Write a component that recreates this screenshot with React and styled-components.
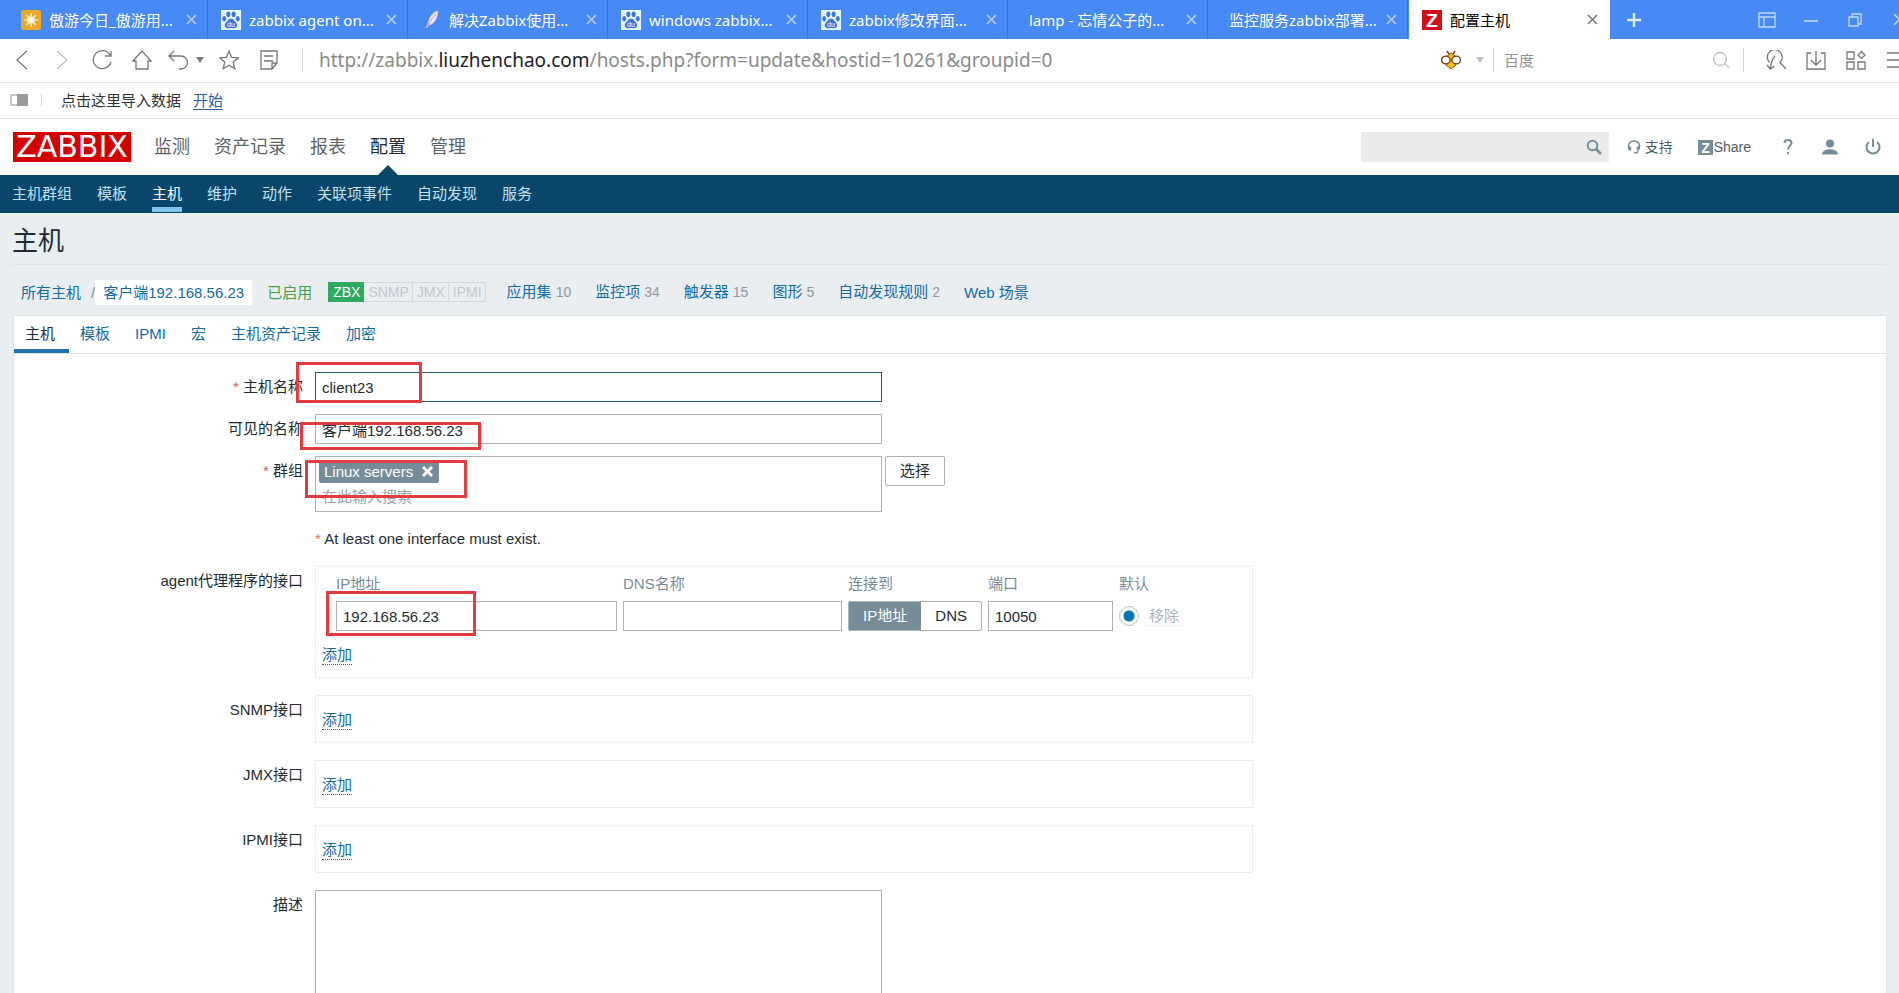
import React from "react";
import styled, { createGlobalStyle, css } from "styled-components";

const colors = {
  chrome: "#4789f5",
  link: "#146ba6",
  navy: "#0a466a",
  slate: "#768d99",
  text: "#1f2c33",
  pageBg: "#ebeef0",
  line: "#dfe4e7",
  inputLine: "#a9b4b4",
  mark: "#e43b40",
};

const uiFont = `"Noto Sans", "Noto Sans CJK SC", sans-serif`;
const pageFont = `"Liberation Sans", "Noto Sans CJK SC", sans-serif`;

const GlobalStyle = createGlobalStyle`
  * { box-sizing: border-box; }
  body {
    margin: 0;
    overflow: hidden;
    background: ${colors.pageBg};
    color: ${colors.text};
    font-family: ${pageFont};
    font-size: 15px;
    line-height: 20px;
  }
  button, input, textarea { font: inherit; color: inherit; }
  svg { display: block; flex: none; }
`;

/* Browser window */

const BrowserChrome = styled.div`
  font-family: ${uiFont};
  background: #fff;
`;

const PlainButton = styled.button`
  border: none;
  background: none;
  padding: 0;
  display: flex;
  align-items: center;
  justify-content: center;
  flex: none;
`;

const TabBar = styled.div`
  display: flex;
  height: 39px;
  padding-left: 8px;
  background: ${colors.chrome};
  color: #fff;
  overflow: hidden;
`;

const Tab = styled.div`
  display: flex;
  align-items: center;
  gap: 8px;
  flex: 0 0 200px;
  padding: 0 10px 0 13px;
  border-right: 1px solid #3a70cc;
  white-space: nowrap;
  ${(props) =>
    props.$active &&
    css`
      flex-basis: 201px;
      padding-right: 12px;
      margin-left: 1px;
      background: #fff;
      color: #000;
      border-right: none;
    `}
`;

const TabTitle = styled.span`
  flex: 1;
  min-width: 0;
`;

const TabClose = styled(PlainButton)`
  color: ${(props) => (props.$active ? "#777" : "#b5d0fb")};
`;

const NewTab = styled(PlainButton)`
  width: 48px;
  color: #dceaff;
`;

const WindowControls = styled.div`
  display: flex;
  margin: 0 -22px 0 auto;
  color: #c4dafc;
`;

const WindowButton = styled(PlainButton)`
  width: 44px;
`;

const Toolbar = styled.div`
  display: flex;
  align-items: center;
  height: 44px;
  padding: 0 0 2px 2px;
  border-bottom: 1px solid #e3e3e3;
  color: #777;
  overflow: hidden;
`;

const ToolButton = styled(PlainButton)`
  width: ${(props) => props.$width || 40}px;
  height: 40px;
  gap: ${(props) => props.$gap || 0}px;
  color: ${(props) => (props.$dim ? "#c0c0c0" : "inherit")};
`;

const Divider = styled.span`
  width: 1px;
  height: ${(props) => (props.$short ? 12 : 24)}px;
  background: #d4d4d4;
  margin: 0 ${(props) => props.$right || 0}px 0 ${(props) => props.$left || 0}px;
`;

const Address = styled.div`
  flex: 1;
  font-size: 19px;
  line-height: 24px;
  color: #8b8b8b;
  white-space: nowrap;

  b {
    font-weight: normal;
    color: #222;
  }
`;

const EngineInput = styled.input`
  width: 206px;
  border: none;
  outline: none;
  padding: 0;

  &::placeholder {
    color: #929292;
    opacity: 1;
  }
`;

const ToolbarEnd = styled.div`
  display: flex;
  margin: 0 -17px 0 12px;
`;

const BookmarkBar = styled.div`
  display: flex;
  align-items: center;
  height: 36px;
  padding: 0 0 2px 10px;
  border-bottom: 1px solid #e3e3e3;
  color: #333;

  a {
    color: #2f5fa8;
    margin-left: 12px;
    text-underline-offset: 3px;
  }
`;

/* Zabbix header */

const Header = styled.header`
  display: flex;
  align-items: center;
  height: 56px;
  padding: 0 13px;
  background: #fff;
`;

const Logo = styled.a`
  width: 118px;
  height: 30px;
  background: #d40000;
  color: #fff;
  font: 30px/29px "DejaVu Sans", sans-serif;
  text-align: center;
  text-decoration: none;
`;

const MainNav = styled.nav`
  display: flex;
  align-self: stretch;
  gap: 24px;
  margin-left: 23px;
  font-size: 18px;
`;

const MainLink = styled.a`
  display: flex;
  align-items: center;
  position: relative;
  color: ${(props) => (props.$active ? "#1f2c33" : "#5c6468")};
  text-decoration: none;
  ${(props) =>
    props.$active &&
    css`
      &::after {
        content: "";
        position: absolute;
        left: calc(50% - 10px);
        bottom: 0;
        border: 10px solid transparent;
        border-top: none;
        border-bottom-color: ${colors.navy};
      }
    `}
`;

const SearchForm = styled.form`
  display: flex;
  align-items: center;
  width: 248px;
  height: 30px;
  margin-left: auto;
  padding-right: 7px;
  background: #ebebeb;
  color: ${colors.slate};

  input {
    flex: 1;
    min-width: 0;
    border: none;
    outline: none;
    background: none;
  }
`;

const HeaderLinks = styled.div`
  display: flex;
  align-items: center;
  margin-left: 18px;
  font-size: 14px;
`;

const HeaderLink = styled.a`
  display: flex;
  align-items: center;
  gap: ${(props) => props.$gap || 0}px;
  margin-right: ${(props) => props.$after || 0}px;
  color: #4f5d65;
  text-decoration: none;

  svg {
    color: ${colors.slate};
  }
`;

const SubNav = styled.nav`
  display: flex;
  gap: 25px;
  height: 38px;
  padding: 0 12px;
  background: ${colors.navy};
`;

const SubLink = styled.a`
  padding-top: 9px;
  height: 37px;
  color: ${(props) => (props.$active ? "#fff" : "#c3e2f5")};
  border-bottom: 5px solid ${(props) => (props.$active ? "#81c3ee" : "transparent")};
  text-decoration: none;
`;

/* Host page */

const Main = styled.main`
  padding: 0 12px;
`;

const PageTitle = styled.h1`
  margin: 0;
  padding-top: 5px;
  font-size: 26px;
  font-weight: normal;
  line-height: 46px;
  border-bottom: 1px solid ${colors.line};
`;

const ObjectBar = styled.div`
  display: flex;
  align-items: center;
  padding: 14px 9px 10px;
  line-height: 25px;
  white-space: nowrap;

  a {
    color: ${colors.link};
    text-decoration: none;
  }
`;

const Slash = styled.span`
  color: ${colors.slate};
  margin-left: 10px;
`;

const CurrentHost = styled.a`
  background: #fff;
  padding: 0 8px;
`;

const Status = styled.span`
  color: #429e47;
  margin: 0 16px 0 15px;
`;

const Badges = styled.div`
  display: flex;
  height: 20px;
  margin-right: 21px;
  font-size: 14px;
  line-height: 18px;
`;

const Badge = styled.span`
  padding: 0 3px 0 4px;
  border: 1px solid ${(props) => (props.$on ? "#2fa860" : "#d3d9dc")};
  background: ${(props) => (props.$on ? "#2fa860" : "transparent")};
  color: ${(props) => (props.$on ? "#fff" : "#bfc7cb")};

  & + & {
    border-left-width: 0;
  }
`;

const ObjectLink = styled.span`
  margin-right: 24px;
`;

const Count = styled.span`
  margin-left: 4px;
  font-size: 14px;
  color: #8b999f;
`;

const Panel = styled.div`
  margin-left: 1px;
  background: #fff;
  border: 1px solid ${colors.line};
`;

const PanelTabs = styled.div`
  display: flex;
  border-bottom: 1px solid ${colors.line};
`;

const PanelTab = styled.button`
  padding: 8px 14px 5px 11px;
  border: none;
  border-bottom: 4px solid ${(props) => (props.$active ? "#1c73a8" : "transparent")};
  background: none;
  color: ${(props) => (props.$active ? colors.text : colors.link)};
`;

const Form = styled.form`
  padding: 18px 0 20px;
`;

const Row = styled.div`
  display: grid;
  grid-template-columns: 289px minmax(0, 1fr);
  column-gap: 12px;
  margin-bottom: ${(props) => (props.$loose ? 17 : 12)}px;
`;

const RowLabel = styled.label`
  padding-top: 5px;
  text-align: right;

  ${(props) =>
    props.$required &&
    css`
      &::before {
        content: "* ";
        color: #e45959;
      }
    `}
`;

const Field = styled.div`
  position: relative;
  display: flex;
  align-items: flex-start;
  gap: 3px;
`;

const TextInput = styled.input`
  width: ${(props) => props.$width}px;
  height: 30px;
  padding: 0 6px;
  border: 1px solid ${(props) => (props.$focused ? "#1f5f85" : colors.inputLine)};
  border-radius: 0;
  outline: none;
  background: #fff;
`;

const TextArea = styled.textarea`
  width: 567px;
  height: 130px;
  border: 1px solid ${colors.inputLine};
  outline: none;
  resize: none;
`;

/* Red highlight laid over the form */
const Mark = styled.span`
  position: absolute;
  left: ${(props) => props.$x}px;
  top: ${(props) => props.$y}px;
  width: ${(props) => props.$w}px;
  height: ${(props) => props.$h}px;
  border: 3px solid ${colors.mark};
  pointer-events: none;
`;

const MultiSelect = styled.div`
  width: 567px;
  height: 56px;
  padding: 3px;
  border: 1px solid ${colors.inputLine};

  input {
    display: block;
    width: 100%;
    height: 20px;
    margin-top: 4px;
    padding: 0 3px;
    border: none;
    outline: none;
  }

  input::placeholder {
    color: #9aa5aa;
    opacity: 1;
  }
`;

const Tag = styled.span`
  display: inline-flex;
  align-items: center;
  gap: 9px;
  height: 23px;
  padding: 0 6px 0 5px;
  border-radius: 2px;
  background: ${colors.slate};
  color: #fff;
  vertical-align: top;
`;

const SelectButton = styled.button`
  width: 60px;
  height: 30px;
  padding: 0;
  border: 1px solid ${colors.inputLine};
  border-radius: 2px;
  background: #fff;
`;

const Hint = styled.p`
  margin: 0;

  span {
    color: #e0704f;
  }
`;

const InterfaceBox = styled.div`
  flex: 0 1 938px;
  padding: ${(props) => (props.$filled ? "7px 6px 12px" : "14px 6px 12px")};
  border: 1px solid #e9ecee;
`;

const AddLink = styled.button`
  display: block;
  height: 20px;
  padding: 0;
  border: none;
  border-bottom: 1px dotted ${colors.link};
  background: none;
  color: ${colors.link};
  line-height: 19px;
`;

const InterfaceTable = styled.table`
  border-collapse: collapse;
  margin-bottom: 14px;

  th {
    padding: 0 0 7px;
    color: ${colors.slate};
    font-weight: normal;
    text-align: left;
  }

  td {
    height: 30px;
    padding: 0 6px 0 0;
    vertical-align: middle;
  }

  td:first-child {
    padding: 0 4px;
  }
`;

const DragHandle = styled.span`
  display: block;
  width: 6px;
  height: 12px;
  background: radial-gradient(circle, #c5cdd1 1px, transparent 1px) 0 0 / 3px 3px;
`;

const Toggle = styled.div`
  display: flex;
  width: 134px;
  height: 30px;
  border: 1px solid ${colors.inputLine};
  border-radius: 2px;
  line-height: 28px;
  text-align: center;

  input {
    appearance: none;
    position: absolute;
    margin: 0;
  }

  label {
    flex: 1 0 auto;
    padding: 0 13px;
  }

  input:checked + label {
    background: ${colors.slate};
    color: #fff;
  }
`;

const DefaultCell = styled.div`
  display: flex;
  align-items: center;
  gap: 10px;
`;

const Radio = styled.input`
  appearance: none;
  width: 20px;
  height: 20px;
  margin: 0;
  border: 1px solid #b5bfc4;
  border-radius: 50%;
  background: radial-gradient(circle, #0275b8 5px, #fff 6px);
`;

const RemoveButton = styled.button`
  padding: 0;
  border: none;
  border-bottom: 1px dotted #d5dadd;
  background: none;
  color: #acb5ba;
  line-height: 19px;
`;

/* Icons */

const Icon = ({ size = 20, width, height, stroke = 1.3, children }) => (
  <svg
    width={width || size}
    height={height || size}
    viewBox={`0 0 ${width || size} ${height || size}`}
    fill="none"
    stroke="currentColor"
    strokeWidth={stroke}
    aria-hidden="true"
  >
    {children}
  </svg>
);

const CloseIcon = () => (
  <Icon size={11} stroke={1.5}>
    <path d="M1 1l9 9M10 1l-9 9" />
  </Icon>
);

const SunIcon = () => (
  <Icon stroke={1.6}>
    <rect width="20" height="20" rx="2" fill="#e5a92c" stroke="none" />
    <path d="M10 3v14M3 10h14M5 5l10 10M15 5L5 15" stroke="#fbe9b5" />
    <circle cx="10" cy="10" r="4" fill="#fffbe9" stroke="#f5d27a" strokeWidth="1" />
  </Icon>
);

const PawIcon = () => (
  <Icon>
    <rect width="20" height="20" fill="#e6f7fd" stroke="none" />
    <g fill="#3b76d9" stroke="none">
      <ellipse cx="3.2" cy="8.6" rx="2" ry="2.7" />
      <ellipse cx="7.3" cy="4.2" rx="2" ry="2.8" />
      <ellipse cx="12.6" cy="4.2" rx="2" ry="2.8" />
      <ellipse cx="16.8" cy="8.6" rx="2" ry="2.7" />
      <path d="M10 8.5c2.2 0 3.2 2.3 4.8 3.8 2.4 2.2 1.6 6-1.6 6-1.3 0-2-.4-3.2-.4s-1.9.4-3.2.4c-3.2 0-4-3.8-1.6-6C6.8 10.8 7.8 8.5 10 8.5z" />
    </g>
    <text x="10" y="17" fontSize="7" fontFamily="Liberation Sans" fill="#fff" stroke="none" textAnchor="middle">
      du
    </text>
  </Icon>
);

const FeatherIcon = () => (
  <Icon>
    <path
      d="M17 1c-5 1-9 6-10 13l-2 4 3-3c5-1 8-6 9-14z"
      fill="#f3e9f7"
      stroke="#cfc2ec"
      strokeWidth="1"
    />
    <path d="M15 4c-3 3-6 7-8 12" stroke="#b79bd0" strokeWidth="1" />
  </Icon>
);

const ZIcon = ({ size = 20, fill = "#d0111b" }) => (
  <Icon size={size}>
    <rect width={size} height={size} fill={fill} stroke="none" />
    <text
      x={size / 2}
      y={size * 0.85}
      fontSize={size * 0.95}
      fontWeight="bold"
      fontFamily="Liberation Sans"
      fill="#fff"
      stroke="none"
      textAnchor="middle"
    >
      Z
    </text>
  </Icon>
);

const Caret = () => (
  <Icon width={8} height={6}>
    <path d="M0 0h8L4 6z" fill="currentColor" stroke="none" />
  </Icon>
);

const BeeIcon = () => (
  <Icon stroke={1.4}>
    <path d="M6 1l2 3M14 1l-2 3" stroke="#7a3c10" />
    <path d="M10 3l4 3-1 3 2 6-5 4-5-4 2-6-1-3z" fill="#f6c30f" stroke="#8a4a12" strokeWidth="1" />
    <ellipse cx="4.8" cy="10" rx="4.2" ry="3.9" fill="#fff" stroke="#7a3c10" />
    <ellipse cx="15.2" cy="10" rx="4.2" ry="3.9" fill="#fff" stroke="#7a3c10" />
    <path d="M8 8l4 4M12 8l-4 4" stroke="#b06a10" />
  </Icon>
);

const tabs = [
  { title: "傲游今日_傲游用...", icon: <SunIcon /> },
  { title: "zabbix agent on...", icon: <PawIcon /> },
  { title: "解决Zabbix使用...", icon: <FeatherIcon /> },
  { title: "windows zabbix...", icon: <PawIcon /> },
  { title: "zabbix修改界面...", icon: <PawIcon /> },
  { title: "lamp - 忘情公子的..." },
  { title: "监控服务zabbix部署..." },
  { title: "配置主机", icon: <ZIcon />, active: true },
];

const mainMenu = ["监测", "资产记录", "报表", "配置", "管理"];
const subMenu = ["主机群组", "模板", "主机", "维护", "动作", "关联项事件", "自动发现", "服务"];
const formTabs = ["主机", "模板", "IPMI", "宏", "主机资产记录", "加密"];
const objects = [
  ["应用集", 10],
  ["监控项", 34],
  ["触发器", 15],
  ["图形", 5],
  ["自动发现规则", 2],
  ["Web 场景"],
];

const Browser = () => (
  <BrowserChrome>
    <TabBar>
      {tabs.map(({ title, icon, active }) => (
        <Tab key={title} $active={active}>
          {icon || <span />}
          <TabTitle>{title}</TabTitle>
          <TabClose $active={active} aria-label="关闭标签">
            <CloseIcon />
          </TabClose>
        </Tab>
      ))}
      <NewTab aria-label="新标签">
        <Icon size={16} stroke={2.4}>
          <path d="M8 1v14M1 8h14" />
        </Icon>
      </NewTab>
      <WindowControls>
        <WindowButton aria-label="布局">
          <Icon width={18} height={16}>
            <path d="M1 1h16v14H1zM1 5h16M6 5v10" />
          </Icon>
        </WindowButton>
        <WindowButton aria-label="最小化">
          <Icon size={14} stroke={1.6}>
            <path d="M0 8h14" />
          </Icon>
        </WindowButton>
        <WindowButton aria-label="还原">
          <Icon size={14}>
            <path d="M1 4h9v9H1zM4 4V1h9v10h-3" />
          </Icon>
        </WindowButton>
        <WindowButton aria-label="关闭">
          <Icon size={13} stroke={1.5}>
            <path d="M1 1l11 11M12 1L1 12" />
          </Icon>
        </WindowButton>
      </WindowControls>
    </TabBar>
    <Toolbar>
      <ToolButton aria-label="后退">
        <Icon>
          <path d="M15 1L5 10l10 9" />
        </Icon>
      </ToolButton>
      <ToolButton $dim aria-label="前进">
        <Icon>
          <path d="M5 1l10 9-10 9" />
        </Icon>
      </ToolButton>
      <ToolButton aria-label="刷新">
        <Icon>
          <path d="M18 5A9 9 0 1 0 19 12M19 1v5h-6" />
        </Icon>
      </ToolButton>
      <ToolButton aria-label="主页">
        <Icon>
          <path d="M1 11L10 1l9 10h-3v8H4v-8z" />
        </Icon>
      </ToolButton>
      <ToolButton $width={47} $gap={8} aria-label="撤销">
        <Icon>
          <path d="M6 1L1 6l5 5M1 6h12a6.5 6.5 0 0 1 0 13h-2" />
        </Icon>
        <Caret />
      </ToolButton>
      <ToolButton aria-label="收藏">
        <Icon>
          <path d="M10 1l2.6 6.3 6.6.5-5 4.4 1.6 6.5L10 15.2l-5.8 3.5 1.6-6.5-5-4.4 6.6-.5z" />
        </Icon>
      </ToolButton>
      <ToolButton aria-label="笔记">
        <Icon>
          <path d="M2 1h16v12l-5 6H2zM18 13h-5v6M5 6h9M5 11h9" />
        </Icon>
      </ToolButton>
      <Divider $left={13} $right={16} />
      <Address>
        http://zabbix.<b>liuzhenchao.com</b>/hosts.php?form=update&amp;hostid=10261&amp;groupid=0
      </Address>
      <ToolButton $width={43} $gap={15} $dim aria-label="搜索引擎">
        <BeeIcon />
        <Caret />
      </ToolButton>
      <Divider $left={9} $right={10} />
      <EngineInput placeholder="百度" aria-label="百度" />
      <ToolButton $width={22} $dim aria-label="搜索">
        <Icon size={18}>
          <circle cx="8" cy="8" r="6.5" />
          <path d="M12.5 12.5L17 17" />
        </Icon>
      </ToolButton>
      <Divider $left={11} />
      <ToolbarEnd>
        <ToolButton aria-label="嗅探">
          <Icon>
            <path d="M3.5 12.5A7.5 7.5 0 1 1 14 12.5l6 6.5M9 6c-3 3-4 7-4.5 12M1 15l3.5 4 4-3" />
          </Icon>
        </ToolButton>
        <ToolButton aria-label="下载">
          <Icon>
            <path d="M5 3H1v16h18V3h-4M10 1v14M5 10l5 5 5-5" />
          </Icon>
        </ToolButton>
        <ToolButton aria-label="应用">
          <Icon>
            <path d="M1 2h7v7H1zM1 12h7v7H1zM12 12h7v7h-7zM15.5 1.5L19 5l-3.5 3.5L12 5z" />
          </Icon>
        </ToolButton>
        <ToolButton aria-label="菜单">
          <Icon>
            <path d="M1 3h18M1 10h18M1 17h18" />
          </Icon>
        </ToolButton>
      </ToolbarEnd>
    </Toolbar>
    <BookmarkBar>
      <Icon width={18} height={12}>
        <rect x="1" y="1" width="16" height="10" stroke="#aaa" />
        <rect x="7" y="0" width="11" height="12" fill="#9b9b9b" stroke="none" />
      </Icon>
      <Divider $short $left={13} $right={19} />
      点击这里导入数据
      <a href="#import">开始</a>
    </BookmarkBar>
  </BrowserChrome>
);

const TopHeader = () => (
  <>
    <Header>
      <Logo href="#home">ZABBIX</Logo>
      <MainNav>
        {mainMenu.map((item) => (
          <MainLink key={item} href="#menu" $active={item === "配置"}>
            {item}
          </MainLink>
        ))}
      </MainNav>
      <SearchForm>
        <input aria-label="搜索" />
        <PlainButton type="button" aria-label="搜索">
          <Icon size={16} stroke={2}>
            <circle cx="6.5" cy="6.5" r="4.8" />
            <path d="M10 10l5 5" strokeWidth="2.6" />
          </Icon>
        </PlainButton>
      </SearchForm>
      <HeaderLinks>
        <HeaderLink href="#support" $gap={4} $after={25}>
          <Icon size={14} stroke={1.6}>
            <path d="M2.5 9.5C0 5 2.5 1 7 1s7 4 4.5 8.5M11 11c0 1.5-1.5 2-4 2" />
            <path d="M3 6.5v4M11 6.5v4" strokeWidth="2.4" />
          </Icon>
          支持
        </HeaderLink>
        <HeaderLink href="#share" $gap={1} $after={32}>
          <ZIcon size={15} fill={colors.slate} />
          Share
        </HeaderLink>
        <HeaderLink href="#help" $after={29} aria-label="帮助">
          <Icon width={10} height={16} stroke={2}>
            <path d="M1.5 4C1.5 0 8.5 0 8.5 4c0 2.5-3.5 3-3.5 6.5M5 13v2" />
          </Icon>
        </HeaderLink>
        <HeaderLink href="#profile" $after={27} aria-label="用户">
          <Icon size={16}>
            <g fill="currentColor" stroke="none">
              <circle cx="8" cy="4.5" r="4" />
              <path d="M0 15.5c0-7 16-7 16 0z" />
            </g>
          </Icon>
        </HeaderLink>
        <HeaderLink href="#logout" $after={5} aria-label="退出">
          <Icon size={16} stroke={2}>
            <path d="M4 3a6.5 6.5 0 1 0 8 0M8 0v8" />
          </Icon>
        </HeaderLink>
      </HeaderLinks>
    </Header>
    <SubNav>
      {subMenu.map((item) => (
        <SubLink key={item} href="#section" $active={item === "主机"}>
          {item}
        </SubLink>
      ))}
    </SubNav>
  </>
);

const AgentInterfaces = () => (
  <InterfaceBox $filled>
    <InterfaceTable>
      <thead>
        <tr>
          <th />
          <th>IP地址</th>
          <th>DNS名称</th>
          <th>连接到</th>
          <th>端口</th>
          <th>默认</th>
        </tr>
      </thead>
      <tbody>
        <tr>
          <td>
            <DragHandle />
          </td>
          <td>
            <TextInput $width={281} defaultValue="192.168.56.23" aria-label="IP地址" />
          </td>
          <td>
            <TextInput $width={219} aria-label="DNS名称" />
          </td>
          <td>
            <Toggle>
              <input type="radio" name="useip" id="useip-ip" defaultChecked />
              <label htmlFor="useip-ip">IP地址</label>
              <input type="radio" name="useip" id="useip-dns" />
              <label htmlFor="useip-dns">DNS</label>
            </Toggle>
          </td>
          <td>
            <TextInput $width={125} defaultValue="10050" aria-label="端口" />
          </td>
          <td>
            <DefaultCell>
              <Radio type="radio" name="main" defaultChecked aria-label="默认" />
              <RemoveButton type="button">移除</RemoveButton>
            </DefaultCell>
          </td>
        </tr>
      </tbody>
    </InterfaceTable>
    <AddLink type="button">添加</AddLink>
  </InterfaceBox>
);

const HostForm = () => (
  <Form>
    <Row>
      <RowLabel htmlFor="host" $required>
        主机名称
      </RowLabel>
      <Field>
        <TextInput id="host" $width={567} $focused defaultValue="client23" />
        <Mark $x={-19} $y={-10} $w={126} $h={41} />
      </Field>
    </Row>
    <Row>
      <RowLabel htmlFor="visible-name">可见的名称</RowLabel>
      <Field>
        <TextInput id="visible-name" $width={567} defaultValue="客户端192.168.56.23" />
        <Mark $x={-15} $y={8} $w={181} $h={28} />
      </Field>
    </Row>
    <Row $loose>
      <RowLabel htmlFor="groups" $required>
        群组
      </RowLabel>
      <Field>
        <MultiSelect>
          <Tag>
            Linux servers
            <PlainButton type="button" aria-label="移除 Linux servers">
              <Icon size={11} stroke={3}>
                <path d="M1 1l9 9M10 1l-9 9" />
              </Icon>
            </PlainButton>
          </Tag>
          <input id="groups" placeholder="在此输入搜索" />
        </MultiSelect>
        <SelectButton type="button">选择</SelectButton>
        <Mark $x={-10} $y={4} $w={162} $h={38} />
      </Field>
    </Row>
    <Row $loose>
      <span />
      <Hint>
        <span>*</span> At least one interface must exist.
      </Hint>
    </Row>
    <Row $loose>
      <RowLabel as="div">agent代理程序的接口</RowLabel>
      <Field>
        <AgentInterfaces />
        <Mark $x={11} $y={25} $w={150} $h={45} />
      </Field>
    </Row>
    {["SNMP接口", "JMX接口", "IPMI接口"].map((label) => (
      <Row key={label} $loose>
        <RowLabel as="div">{label}</RowLabel>
        <Field>
          <InterfaceBox>
            <AddLink type="button">添加</AddLink>
          </InterfaceBox>
        </Field>
      </Row>
    ))}
    <Row>
      <RowLabel htmlFor="description">描述</RowLabel>
      <Field>
        <TextArea id="description" />
      </Field>
    </Row>
  </Form>
);

const App = () => (
  <>
    <GlobalStyle />
    <Browser />
    <TopHeader />
    <Main>
      <PageTitle>主机</PageTitle>
      <ObjectBar>
        <a href="#hosts">所有主机</a>
        <Slash>/</Slash>
        <CurrentHost href="#host">客户端192.168.56.23</CurrentHost>
        <Status>已启用</Status>
        <Badges>
          <Badge $on>ZBX</Badge>
          <Badge>SNMP</Badge>
          <Badge>JMX</Badge>
          <Badge>IPMI</Badge>
        </Badges>
        {objects.map(([name, count]) => (
          <ObjectLink key={name}>
            <a href="#object">{name}</a>
            {count && <Count>{count}</Count>}
          </ObjectLink>
        ))}
      </ObjectBar>
      <Panel>
        <PanelTabs>
          {formTabs.map((item, index) => (
            <PanelTab key={item} type="button" $active={index === 0}>
              {item}
            </PanelTab>
          ))}
        </PanelTabs>
        <HostForm />
      </Panel>
    </Main>
  </>
);

export default App;
